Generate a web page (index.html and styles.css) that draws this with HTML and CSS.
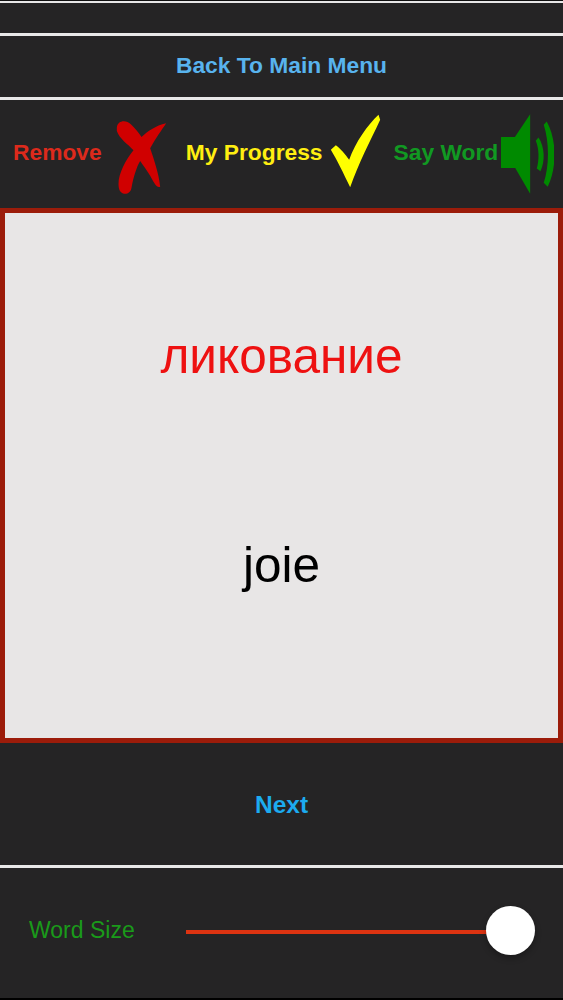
FILE: index.html
```html
<!DOCTYPE html>
<html lang="ru">
<head>
    <meta charset="UTF-8">
    <meta name="viewport" content="width=device-width, initial-scale=1.0">
    <title>Flash Cards</title>
    <link rel="stylesheet" href="styles.css">
</head>
<body>
    <div class="screen">
        <div class="top-bar"></div>

        <div class="menu-bar">
            <a href="#" class="menu-link">Back To Main Menu</a>
        </div>

        <!-- actions -->
        <div class="actions">
            <span class="action-label label-remove">Remove</span>
            <svg class="icon icon-remove" viewBox="48 48 152 222">
                <path d="M50 68 C52 46 78 44 92 58 C104 70 116 84 124 96 C142 80 166 62 198 55 C184 76 168 98 150 130 C160 160 176 205 180 245 C170 252 158 226 150 212 C140 196 128 180 120 168 C110 184 100 215 94 248 C90 272 60 272 56 248 C50 215 74 168 100 136 C82 116 58 102 50 78 Z" fill="#d00000"/>
            </svg>
            <span class="action-label label-progress">My Progress</span>
            <svg class="icon icon-progress" viewBox="15 28 152 222">
                <path d="M160 30 C128 60 92 110 72 165 C60 150 45 130 32 122 L17 135 C35 165 55 205 75 248 C100 175 135 110 165 45 Z" fill="#ffff00"/>
            </svg>
            <span class="action-label label-say">Say Word</span>
            <svg class="icon icon-say" viewBox="22 28 160 240">
                <path d="M22 97 H64 L110 28 V268 L65 190 H22 Z" fill="#008a00"/>
                <path d="M127 108 L135 98 C154 125 156 170 141 200 L130 192 C138 165 137 132 127 108 Z" fill="#008a00"/>
                <path d="M151 60 L160 50 C191 105 191 190 163 247 L151 235 C168 185 168 112 151 60 Z" fill="#008a00"/>
            </svg>
        </div>

        <!-- word card -->
        <div class="card">
            <div class="word word-target">ликование</div>
            <div class="word word-source">joie</div>
        </div>

        <div class="next-bar">
            <a href="#" class="next-link">Next</a>
        </div>

        <div class="size-bar">
            <span class="size-label">Word Size</span>
            <div class="slider">
                <div class="slider-track"></div>
                <div class="slider-thumb"></div>
            </div>
        </div>
    </div>
</body>
</html>
```

FILE: styles.css
```css
html, body {
    margin: 0;
    padding: 0;
}

body {
    background: #252425;
    font-family: "Liberation Sans", Arial, sans-serif;
}

.screen {
    width: 563px;
    height: 1000px;
    display: flex;
    flex-direction: column;
    box-sizing: border-box;
    border-bottom: 2px solid #000;
}

.top-bar {
    height: 32px;
    border-top: 1px solid #111;
    background: linear-gradient(#e8e8e8, #e8e8e8) top / 100% 2px no-repeat;
}

.menu-bar {
    height: 61px;
    border-top: 3px solid #e8e8e8;
    border-bottom: 3px solid #e8e8e8;
    display: flex;
    align-items: center;
    justify-content: center;
}

.menu-link {
    color: #58b3ee;
    font-size: 22.8px;
    font-weight: bold;
    text-decoration: none;
    margin-bottom: 2px;
}

.actions {
    height: 108px;
    display: flex;
    align-items: center;
}

.action-label {
    font-size: 22.8px;
    font-weight: bold;
    white-space: nowrap;
    margin-bottom: 3px;
}

.label-remove {
    color: #dd2a1c;
    margin-left: 13px;
}

.label-progress {
    color: #ffee11;
    margin-left: 19px;
}

.label-say {
    color: #119922;
    margin-left: 13px;
}

.icon {
    flex: none;
}

.icon-remove {
    width: 51px;
    height: 74px;
    margin-left: 14px;
    margin-top: 8px;
}

.icon-progress {
    width: 51px;
    height: 74px;
    margin-left: 7px;
    margin-top: -7px;
}

.icon-say {
    width: 53px;
    height: 80px;
    margin-left: 3px;
}

.card {
    height: 535px;
    box-sizing: border-box;
    border: 5px solid #9c1c0a;
    background: #e8e6e6;
    display: flex;
    flex-direction: column;
    align-items: center;
}

.word {
    font-size: 49.5px;
    line-height: 56px;
}

.word-target {
    color: #ee1111;
    margin-top: 115px;
}

.word-source {
    color: #000;
    margin-top: 153px;
}

.next-bar {
    height: 120px;
    padding-top: 2px;
    display: flex;
    align-items: center;
    justify-content: center;
    border-bottom: 3px solid #e8e8e8;
}

.next-link {
    color: #1cabf0;
    font-size: 24.5px;
    font-weight: bold;
    text-decoration: none;
}

.size-bar {
    flex: 1;
    display: flex;
    align-items: center;
    padding: 0 28px 5px 29px;
}

.size-label {
    color: #1a9a1a;
    font-size: 23px;
    width: 157px;
    flex: none;
}

.slider {
    flex: 1;
    display: flex;
    align-items: center;
}

.slider-track {
    flex: 1;
    height: 4px;
    margin-top: 3px;
    background: #dd3311;
}

.slider-thumb {
    width: 49px;
    height: 49px;
    border-radius: 50%;
    background: #fff;
    box-shadow: 0 3px 6px rgba(0, 0, 0, 0.3);
    margin-left: -1px;
}
```
